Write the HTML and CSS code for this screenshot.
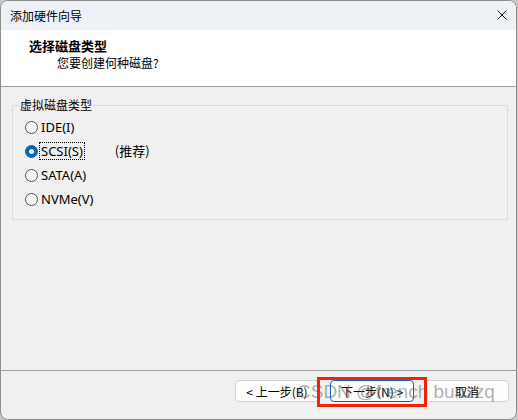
FILE: index.html
```html
<!DOCTYPE html>
<html lang="zh-CN">
<head>
    <meta charset="UTF-8">
    <title>添加硬件向导</title>
    <link rel="stylesheet" href="styles.css">
</head>
<body>
    <div class="window">
        <div class="titlebar">
            <span class="title">添加硬件向导</span>
            <svg class="close" width="10" height="10" viewBox="0 0 10 10">
                <path d="M0.5 0.5L9.5 9.5M9.5 0.5L0.5 9.5" stroke="#1b1b1b" stroke-width="1" fill="none"/>
            </svg>
        </div>

        <div class="header">
            <div class="header-title">选择磁盘类型</div>
            <div class="header-sub">您要创建何种磁盘?</div>
        </div>

        <div class="content">
            <fieldset class="group">
                <legend>虚拟磁盘类型</legend>
                <div class="option"><span class="radio"></span><span class="label">IDE(I)</span></div>
                <div class="option"><span class="radio checked"></span><span class="label focus">SCSI(S)</span><span class="hint">(推荐)</span></div>
                <div class="option"><span class="radio"></span><span class="label">SATA(A)</span></div>
                <div class="option"><span class="radio"></span><span class="label">NVMe(V)</span></div>
            </fieldset>
        </div>

        <div class="footer">
            <button class="btn">&lt; 上一步(B)</button>
            <button class="btn default">下一步(N) &gt;</button>
            <button class="btn">取消</button>
            <!-- watermark + red mark from the original screenshot -->
            <div class="watermark">CSDN @french bunzzq</div>
            <div class="highlight"></div>
        </div>
    </div>
</body>
</html>
```

FILE: styles.css
```css
body { margin: 0; background: #c9c9c9; font-family: "Noto Sans CJK SC", sans-serif; font-size: 12px; color: #000; }

.window { width: 517px; height: 420px; box-sizing: border-box; border: 1px solid #8e8e8e; border-radius: 8px; overflow: hidden; display: flex; flex-direction: column; background: #f0f0f0; }

.titlebar { height: 29px; flex: none; background: #eef2f7; display: flex; align-items: center; justify-content: space-between; padding: 0 9px 0 9px; }
.title { line-height: 16px; }
.close { display: block; margin-top: -1px; }

.header { height: 57px; flex: none; box-sizing: border-box; background: #fff; border-bottom: 1px solid #a0a0a0; padding: 8px 0 0 28px; }
.header-title { font-weight: 700; font-size: 13px; line-height: 16px; }
.header-sub { line-height: 16px; margin: 1px 0 0 28px; }

.content { flex: 1; padding-top: 10px; }

.group { margin: 0 8px 0 11px; padding: 2px 0 8px 12px; border: 1px solid #dcdcdc; }
.group legend { margin-left: -5px; padding: 0; line-height: 16px; }

.option { height: 24px; display: flex; align-items: center; }
.radio { width: 13px; height: 13px; box-sizing: border-box; border: 1px solid #555; border-radius: 50%; background: #f7f7f7; position: relative; flex: none; }
.radio.checked { background: #0067c0; border-color: #0067c0; }
.radio.checked::after { content: ""; position: absolute; left: 3px; top: 3px; width: 5px; height: 5px; border-radius: 50%; background: #fff; }
.label { font-family: "Noto Sans", "Noto Sans CJK SC", sans-serif; font-size: 13px; line-height: 16px; margin-left: 2px; padding: 0 1px; }
.label.focus { outline: 1px dotted #000; outline-offset: 0; }
.hint { margin-left: 31px; font-size: 13px; line-height: 16px; }

.footer { flex: none; height: 39px; border-top: 1px solid #a0a0a0; display: flex; justify-content: flex-end; align-items: flex-start; gap: 11px; padding: 9px 7px 0 0; position: relative; }
.btn { width: 84px; height: 22px; box-sizing: border-box; border: 1px solid #d0d0d0; border-radius: 4px; background: #fdfdfd; font-family: "Noto Sans CJK SC", sans-serif; font-size: 12px; color: #000; padding: 0; }
.btn.default { border-color: #0067c0; }

.watermark { position: absolute; left: 296px; top: 11px; font-family: "Liberation Sans", sans-serif; font-size: 19px; line-height: 20px; color: rgba(100, 100, 100, 0.5); white-space: nowrap; }
.highlight { position: absolute; left: 316px; top: 6px; width: 110px; height: 30px; box-sizing: border-box; border: 3px solid #f0220e; }
```
